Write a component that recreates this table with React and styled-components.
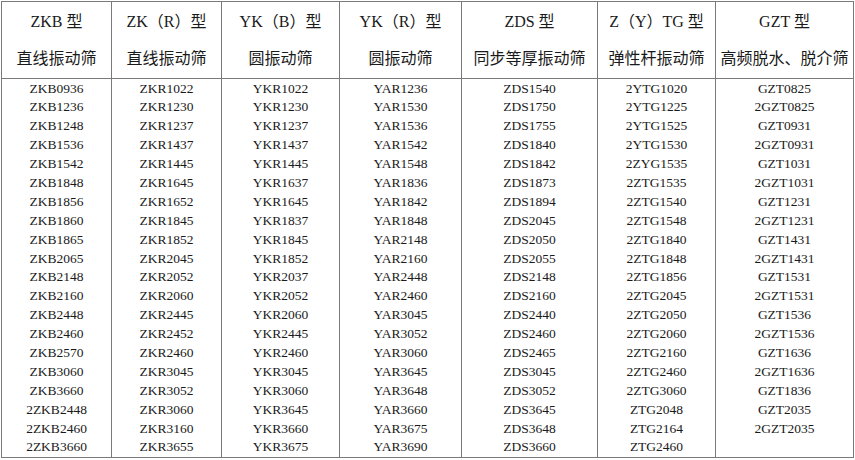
import React from 'react';
import styled, { createGlobalStyle } from 'styled-components';

const COLUMNS = [
  {
    width: 110, model: 'ZKB 型', name: '直线振动筛',
    items: ['ZKB0936', 'ZKB1236', 'ZKB1248', 'ZKB1536', 'ZKB1542', 'ZKB1848', 'ZKB1856', 'ZKB1860', 'ZKB1865', 'ZKB2065', 'ZKB2148', 'ZKB2160', 'ZKB2448', 'ZKB2460', 'ZKB2570', 'ZKB3060', 'ZKB3660', '2ZKB2448', '2ZKB2460', '2ZKB3660']
  },
  {
    width: 110, model: 'ZK（R）型', name: '直线振动筛',
    items: ['ZKR1022', 'ZKR1230', 'ZKR1237', 'ZKR1437', 'ZKR1445', 'ZKR1645', 'ZKR1652', 'ZKR1845', 'ZKR1852', 'ZKR2045', 'ZKR2052', 'ZKR2060', 'ZKR2445', 'ZKR2452', 'ZKR2460', 'ZKR3045', 'ZKR3052', 'ZKR3060', 'ZKR3160', 'ZKR3655']
  },
  {
    width: 118, model: 'YK（B）型', name: '圆振动筛',
    items: ['YKR1022', 'YKR1230', 'YKR1237', 'YKR1437', 'YKR1445', 'YKR1637', 'YKR1645', 'YKR1837', 'YKR1845', 'YKR1852', 'YKR2037', 'YKR2052', 'YKR2060', 'YKR2445', 'YKR2460', 'YKR3045', 'YKR3060', 'YKR3645', 'YKR3660', 'YKR3675']
  },
  {
    width: 122, model: 'YK（R）型', name: '圆振动筛',
    items: ['YAR1236', 'YAR1530', 'YAR1536', 'YAR1542', 'YAR1548', 'YAR1836', 'YAR1842', 'YAR1848', 'YAR2148', 'YAR2160', 'YAR2448', 'YAR2460', 'YAR3045', 'YAR3052', 'YAR3060', 'YAR3645', 'YAR3648', 'YAR3660', 'YAR3675', 'YAR3690']
  },
  {
    width: 136, model: 'ZDS 型', name: '同步等厚振动筛',
    items: ['ZDS1540', 'ZDS1750', 'ZDS1755', 'ZDS1840', 'ZDS1842', 'ZDS1873', 'ZDS1894', 'ZDS2045', 'ZDS2050', 'ZDS2055', 'ZDS2148', 'ZDS2160', 'ZDS2440', 'ZDS2460', 'ZDS2465', 'ZDS3045', 'ZDS3052', 'ZDS3645', 'ZDS3648', 'ZDS3660']
  },
  {
    width: 118, model: 'Z（Y）TG 型', name: '弹性杆振动筛',
    items: ['2YTG1020', '2YTG1225', '2YTG1525', '2YTG1530', '2ZYG1535', '2ZTG1535', '2ZTG1540', '2ZTG1548', '2ZTG1840', '2ZTG1848', '2ZTG1856', '2ZTG2045', '2ZTG2050', '2ZTG2060', '2ZTG2160', '2ZTG2460', '2ZTG3060', 'ZTG2048', 'ZTG2164', 'ZTG2460']
  },
  {
    width: 138, model: 'GZT 型', name: '高频脱水、脱介筛',
    items: ['GZT0825', '2GZT0825', 'GZT0931', '2GZT0931', 'GZT1031', '2GZT1031', 'GZT1231', '2GZT1231', 'GZT1431', '2GZT1431', 'GZT1531', '2GZT1531', 'GZT1536', '2GZT1536', 'GZT1636', '2GZT1636', 'GZT1836', 'GZT2035', '2GZT2035', '']
  }
];

const ROWS = Array.from({ length: 20 }, (_, i) => i);

export default function App() {
  return (
    <>
      <GlobalStyle />
      <Page>
        <Table>
          <colgroup>
            {COLUMNS.map((c, i) => <col key={i} style={{ width: c.width }} />)}
          </colgroup>
          <thead>
            <tr>
              {COLUMNS.map((c, i) => (
                <HeadCell key={i}>
                  <HeadLine>{c.model}</HeadLine>
                  <HeadLine>{c.name}</HeadLine>
                </HeadCell>
              ))}
            </tr>
          </thead>
          <tbody>
            {ROWS.map(r => (
              <tr key={r}>
                {COLUMNS.map((c, i) => (
                  <Cell key={i} $first={r === 0}>
                    {c.items[r]}
                  </Cell>
                ))}
              </tr>
            ))}
          </tbody>
        </Table>
      </Page>
    </>
  );
}

const GlobalStyle = createGlobalStyle`
  html, body { margin: 0; padding: 0; background: #fff; }
  body { font-family: "Liberation Serif", "Noto Sans CJK SC", serif; color: #111; }
`;

const Page = styled.div`
  padding: 1px 0 0 1px;
`;

const Table = styled.table`
  border-collapse: collapse;
  table-layout: fixed;
  width: 853px;
  border: 1px solid #7a7a7a;
`;

const HeadCell = styled.th`
  font-weight: normal;
  border: 1px solid #7a7a7a;
  padding: 1px 0 0;
  text-align: center;
  vertical-align: top;
  height: 75px;
`;

const HeadLine = styled.div`
  line-height: 37px;
  font-size: 16px;
  white-space: nowrap;
  color: #1a1a1a;
`;

const Cell = styled.td`
  border-left: 1px solid #7a7a7a;
  border-right: 1px solid #7a7a7a;
  padding: ${p => (p.$first ? '1px' : '0')} 0 0;
  height: ${p => (p.$first ? '17.9px' : '18.9px')};
  line-height: 18px;
  font-size: 13.5px;
  text-align: center;
  color: #1a1a1a;
`;
